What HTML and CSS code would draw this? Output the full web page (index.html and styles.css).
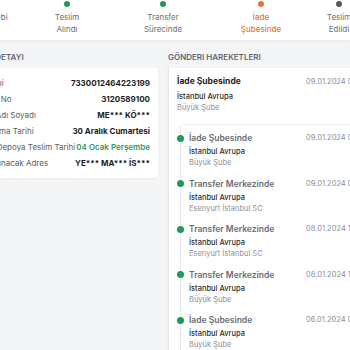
FILE: index.html
```html
<!DOCTYPE html>
<html>
<head>
  <title>Gönderi Takip</title>
  <link rel="stylesheet" href="styles.css">
</head>
<body>
  <header class="steps">
    <div class="step step-1 done">
      <span class="dot"></span>
      <span class="step-label">Kargo Talebi</span>
    </div>
    <div class="step step-2 done">
      <span class="dot"></span>
      <span class="step-label">Teslim<br>Alındı</span>
    </div>
    <div class="step step-3 done">
      <span class="dot"></span>
      <span class="step-label">Transfer<br>Sürecinde</span>
    </div>
    <div class="step step-4 current">
      <span class="dot"></span>
      <span class="step-label">İade<br>Şubesinde</span>
    </div>
    <div class="step step-5">
      <span class="dot"></span>
      <span class="step-label">Teslim<br>Edildi</span>
    </div>
  </header>

  <main class="content">
    <section class="detail">
      <h2 class="section-title">Gönderi Detayı</h2>
      <div class="detail-card">
        <div class="row"><span class="label">Kargo Tipi</span><span class="value">7330012464223199</span></div>
        <div class="row"><span class="label">Referans No</span><span class="value">3120589100</span></div>
        <div class="row"><span class="label">Müşteri Adı Soyadı</span><span class="value">ME*** KÖ***</span></div>
        <div class="row"><span class="label">Teslim Alma Tarihi</span><span class="value">30 Aralık Cumartesi</span></div>
        <div class="row"><span class="label">Tahmini Depoya Teslim Tarihi</span><span class="value green">04 Ocak Perşembe</span></div>
        <div class="row"><span class="label">Teslim Alınacak Adres</span><span class="value">YE*** MA*** İS***</span></div>
      </div>
    </section>

    <section class="moves">
      <h2 class="section-title">Gönderi Hareketleri</h2>
      <div class="moves-card">
        <div class="latest">
          <div class="move-info">
            <div class="latest-title">İade Şubesinde</div>
            <div class="city">İstanbul Avrupa</div>
            <div class="branch">Büyük Şube</div>
          </div>
          <div class="date">09.01.2024 08:42</div>
        </div>
        <div class="sep"></div>

        <div class="timeline">
          <div class="move">
            <span class="move-dot"></span>
            <div class="move-info">
              <div class="move-title">İade Şubesinde</div>
              <div class="city">İstanbul Avrupa</div>
              <div class="branch">Büyük Şube</div>
            </div>
            <div class="date">09.01.2024 08:42</div>
          </div>
          <div class="move">
            <span class="move-dot"></span>
            <div class="move-info">
              <div class="move-title">Transfer Merkezinde</div>
              <div class="city">İstanbul Avrupa</div>
              <div class="branch">Esenyurt İstanbul SC</div>
            </div>
            <div class="date">09.01.2024 06:15</div>
          </div>
          <div class="move">
            <span class="move-dot"></span>
            <div class="move-info">
              <div class="move-title">Transfer Merkezinde</div>
              <div class="city">İstanbul Avrupa</div>
              <div class="branch">Esenyurt İstanbul SC</div>
            </div>
            <div class="date">08.01.2024 19:30</div>
          </div>
          <div class="move">
            <span class="move-dot"></span>
            <div class="move-info">
              <div class="move-title">Transfer Merkezinde</div>
              <div class="city">İstanbul Avrupa</div>
              <div class="branch">Büyük Şube</div>
            </div>
            <div class="date">08.01.2024 17:05</div>
          </div>
          <div class="move">
            <span class="move-dot"></span>
            <div class="move-info">
              <div class="move-title">İade Şubesinde</div>
              <div class="city">İstanbul Avrupa</div>
              <div class="branch">Büyük Şube</div>
            </div>
            <div class="date">06.01.2024 08:20</div>
          </div>
          <div class="move">
            <span class="move-dot"></span>
            <div class="move-info">
              <div class="move-title">Teslim Alındı</div>
              <div class="city">İstanbul Avrupa</div>
              <div class="branch">Büyük Şube</div>
            </div>
            <div class="date">30.12.2023 14:10</div>
          </div>
        </div>
      </div>
    </section>
  </main>
</body>
</html>
```

FILE: styles.css
```css
* {
  box-sizing: border-box;
}

html, body {
  margin: 0;
  height: 100%;
}

body {
  font-family: "Inter", "Noto Sans", sans-serif;
  background-color: #f4f5f7;
  color: #222;
  overflow: hidden;
}

/* Steps */
.steps {
  display: flex;
  height: 40px;
  background-color: #fff;
  box-shadow: 0 1px 4px rgba(0, 0, 0, 0.06);
  position: relative;
  z-index: 1;
}

.step {
  display: flex;
  flex-direction: column;
  align-items: center;
  flex: none;
}

.step-1 { width: 88px; margin-left: -60px; }
.step-2 { width: 78px; }
.step-3 { width: 114px; }
.step-4 { width: 82px; }
.step-5 { width: 74px; }

.dot {
  width: 6px;
  height: 6px;
  margin-top: 1px;
  border-radius: 50%;
  background-color: #5c5c5c;
}

.step.done .dot {
  background-color: #1e9a5c;
}

.step.current .dot {
  background-color: #e8753a;
}

.step-label {
  margin-top: 4px;
  font-size: 8px;
  line-height: 12px;
  text-align: center;
  color: #6f6f6f;
  white-space: nowrap;
}

.step.current .step-label {
  color: #e0773c;
  font-weight: 500;
}

/* Content */
.content {
  display: flex;
  margin-left: -43px;
  padding-top: 11px;
}

.section-title {
  margin: 0 0 5px;
  font-size: 8px;
  line-height: 12px;
  font-weight: 600;
  text-transform: uppercase;
  color: #626770;
  white-space: nowrap;
}

.detail {
  flex: none;
  width: 201px;
}

.detail-card {
  background-color: #fff;
  border-radius: 3px;
  box-shadow: 0 1px 3px rgba(0, 0, 0, 0.05);
  padding: 7px 8px 7px 8px;
}

.row {
  display: flex;
  justify-content: space-between;
  line-height: 16px;
  white-space: nowrap;
}

.label {
  font-size: 8px;
  color: #5a5d63;
}

.value {
  font-size: 8px;
  font-weight: 700;
  color: #1d1d1f;
}

.value.green {
  color: #2b9b63;
  font-weight: 600;
}

.moves {
  flex: none;
  width: 240px;
  margin-left: 10px;
}

.moves-card {
  background-color: #fff;
  border-left: 1px solid #e4e6ea;
  box-shadow: -1px 0 3px rgba(0, 0, 0, 0.04);
  height: 400px;
}

.latest {
  display: grid;
  grid-template-columns: 129px auto;
  padding: 7px 0 11px 8px;
}

.latest-title {
  font-size: 8.5px;
  line-height: 13px;
  font-weight: 700;
  color: #1f1f1f;
  margin-bottom: 3px;
}

.city {
  font-size: 7.5px;
  line-height: 11px;
  font-weight: 500;
  color: #2e2e2e;
}

.branch {
  font-size: 7.5px;
  line-height: 11px;
  color: #8e9096;
}

.date {
  font-size: 7.5px;
  line-height: 13px;
  color: #8c8e93;
  white-space: nowrap;
}

.sep {
  height: 1px;
  margin-left: 14px;
  background-color: #eeeff1;
}

.timeline {
  margin-left: 11px;
  padding-top: 7px;
  border-left: 1px solid #e6e8eb;
}

.move {
  position: relative;
  display: grid;
  grid-template-columns: 117px auto;
  padding-left: 8px;
  margin-bottom: 9.5px;
}

.move-dot {
  position: absolute;
  left: -4.5px;
  top: 2.5px;
  width: 7px;
  height: 7px;
  border-radius: 50%;
  background-color: #1e9a5c;
}

.move-title {
  font-size: 8.5px;
  line-height: 12px;
  font-weight: 600;
  color: #6b6d72;
  margin-bottom: 2px;
}

.move .date {
  line-height: 12px;
}
```
